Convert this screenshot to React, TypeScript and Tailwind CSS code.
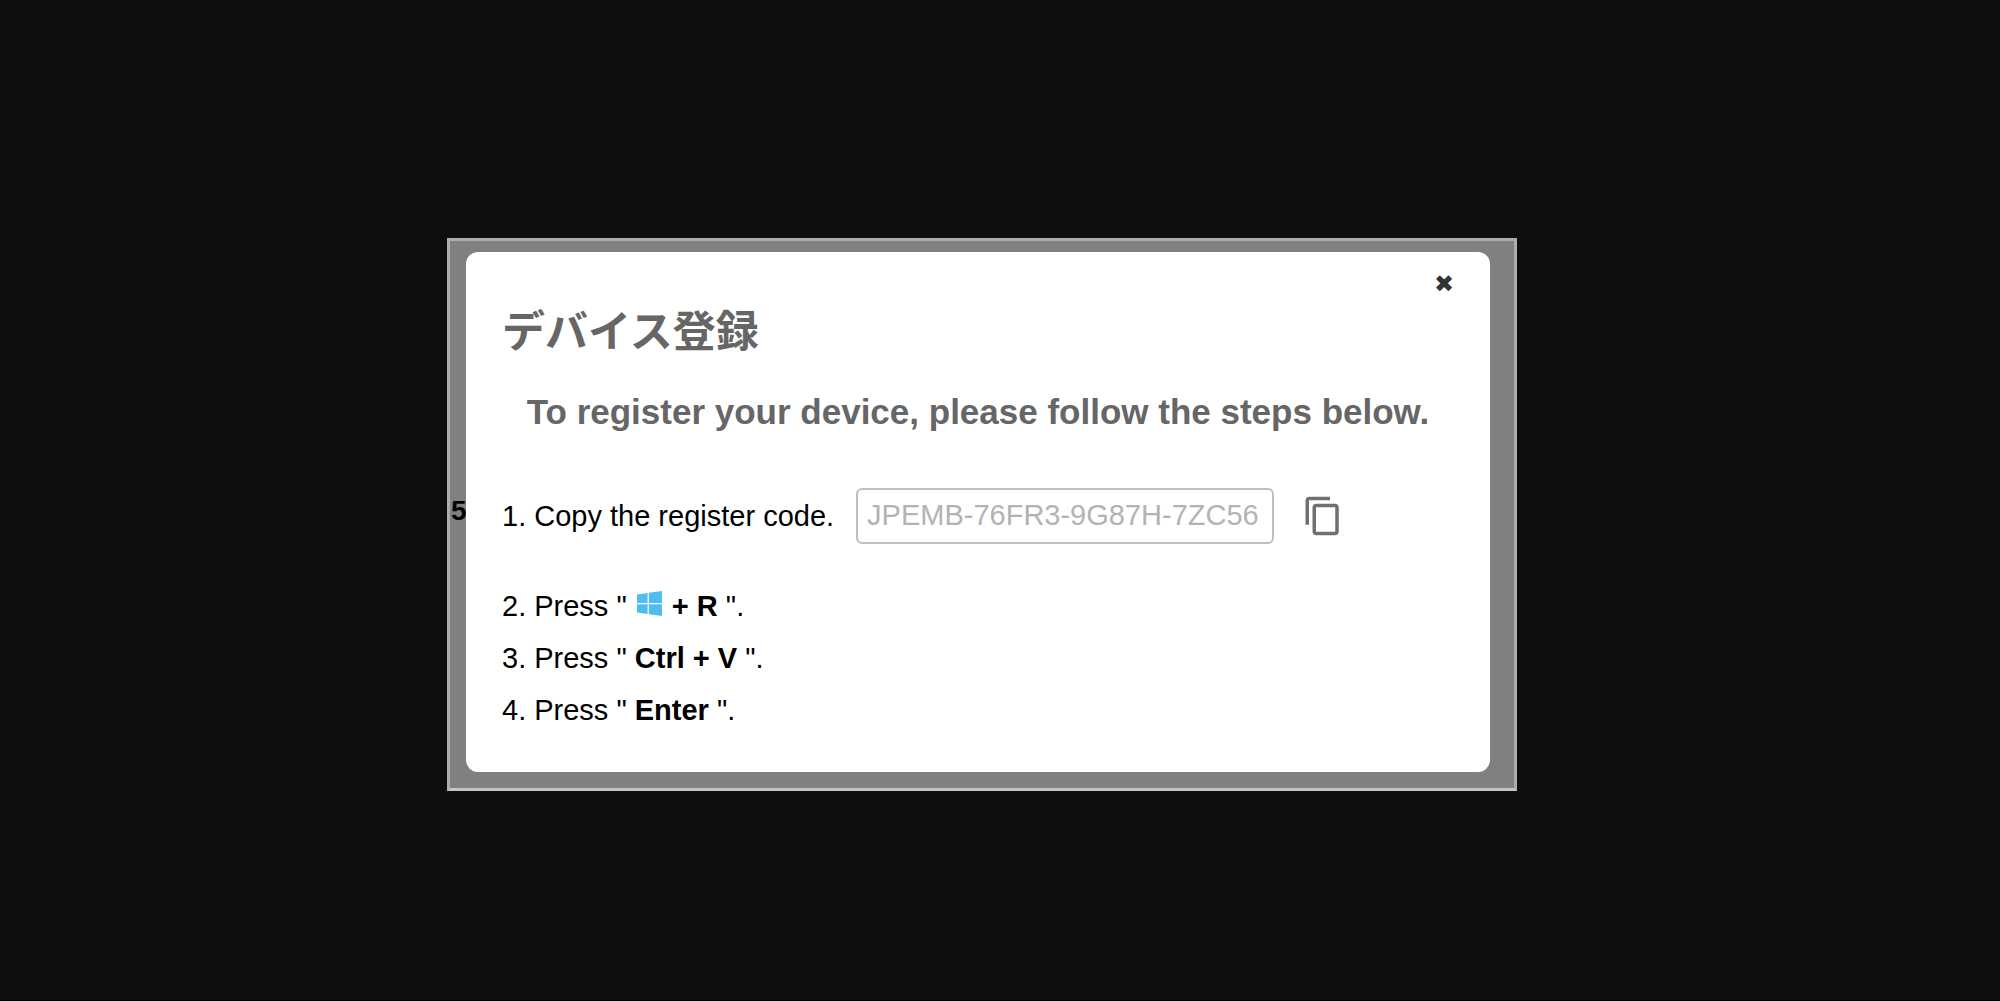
import { MdContentCopy } from 'react-icons/md';

const REGISTER_CODE = 'JPEMB-76FR3-9G87H-7ZC56';

function WindowsLogo() {
  return (
    <svg viewBox="0 0 25 25" className="mx-0.5 inline-block size-[25px] align-baseline" fill="#50bdf0" role="img" aria-label="Windows">
      <path d="M0 3.6 10.6 2v10H0zM11.8 1.8 25 0v12H11.8zM0 13.2h10.6v9.9L0 21.6zM11.8 13.2H25V25l-13.2-1.7z" />
    </svg>
  );
}

export default function App() {
  const copyCode = () => {
    navigator.clipboard?.writeText(REGISTER_CODE);
  };

  return (
    <main className="flex min-h-screen items-center justify-center border-b border-black bg-[#0e0e0e] pt-[28px] pr-[36px] font-['Liberation_Sans','Noto_Sans_CJK_JP',sans-serif] text-black">
      {/* Dimmed page behind the dialog */}
      <div className="relative w-full max-w-[1070px] border-3 border-[#acacac] border-b-[#c4c4c4] bg-[#808080] pt-[11px] pr-6 pb-4 pl-4">
        <span className="absolute top-[254px] left-px text-[28px] leading-8 font-bold">5</span>

        <section role="dialog" aria-labelledby="dialog-title" className="relative rounded-xl bg-white px-9 pt-5 pb-9">
          <div className="flex h-6 justify-end">
            <button type="button" aria-label="Close" className="font-['DejaVu_Sans',sans-serif] text-[24px] leading-6 text-[#333]">
              ✖
            </button>
          </div>

          <h1 id="dialog-title" className="mt-1 text-[43px] leading-[64px] font-bold text-[#666]">
            デバイス登録
          </h1>
          <h2 className="mt-7 text-center text-[35px] leading-10 font-bold text-[#666]">
            To register your device, please follow the steps below.
          </h2>

          <ol className="mt-14 text-[29px] leading-[52px]">
            <li className="mb-9 flex items-center">
              <label htmlFor="register-code">1. Copy the register code.</label>
              <input
                id="register-code"
                readOnly
                value={REGISTER_CODE}
                className="ml-[22px] h-14 w-[418px] rounded-md border-2 border-[#bfbfbf] px-[9px] text-[#b3b3b3]"
              />
              <button type="button" onClick={copyCode} aria-label="Copy register code" className="ml-7 text-[#707070]">
                <MdContentCopy size={42} />
              </button>
            </li>
            <li>
              2. Press " <WindowsLogo /> <b>+ R</b> ".
            </li>
            <li>
              3. Press " <b>Ctrl + V</b> ".
            </li>
            <li>
              4. Press " <b>Enter</b> ".
            </li>
          </ol>
        </section>
      </div>
    </main>
  );
}
